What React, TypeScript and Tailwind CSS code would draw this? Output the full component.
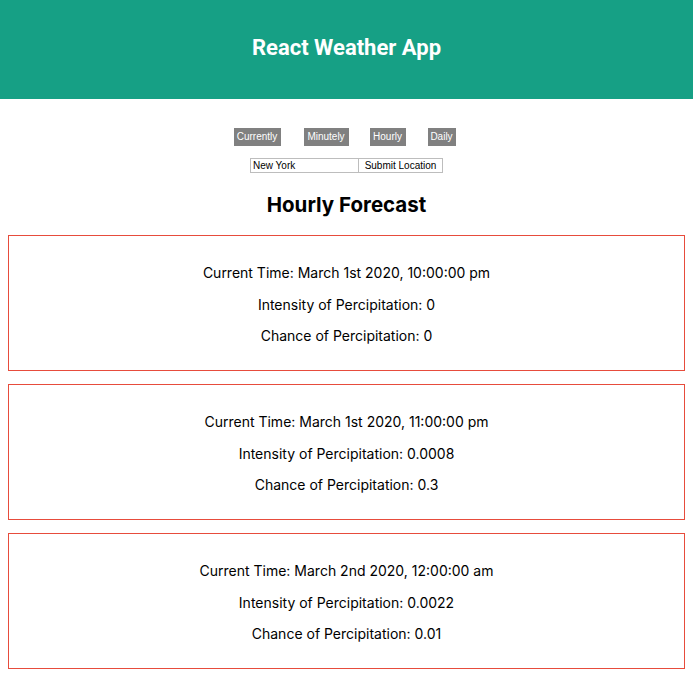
import React from "react";

const items = [
  { time: "March 1st 2020, 10:00:00 pm", intensity: "0", chance: "0" },
  { time: "March 1st 2020, 11:00:00 pm", intensity: "0.0008", chance: "0.3" },
  { time: "March 2nd 2020, 12:00:00 am", intensity: "0.0022", chance: "0.01" },
];

export default function App() {
  return (
    <div className="bg-white text-black" style={{ fontFamily: "Inter, 'Noto Sans', sans-serif" }}>
      <header className="h-[99px] bg-[#16a085] flex items-center justify-center pb-[3px]">
        <h1 className="text-white text-[22px] leading-[26px] font-bold" style={{ fontFamily: "Roboto, 'Liberation Sans', sans-serif" }}>
          React Weather App
        </h1>
      </header>
      <div className="flex justify-center mt-[29px] pr-[4px] text-[10px]" style={{ fontFamily: "'Liberation Sans', Arial, sans-serif" }}>
        <button className="bg-[#808080] text-white h-[18px] w-[47px] leading-[18px]">Currently</button>
        <button className="bg-[#808080] text-white h-[18px] w-[45px] ml-[23px] leading-[18px]">Minutely</button>
        <button className="bg-[#808080] text-white h-[18px] w-[36px] ml-[21px] leading-[18px]">Hourly</button>
        <button className="bg-[#808080] text-white h-[18px] w-[28px] ml-[22px] leading-[18px]">Daily</button>
      </div>
      <div className="flex justify-center mt-[12px] text-[10px]" style={{ fontFamily: "'Liberation Sans', Arial, sans-serif" }}>
        <input
          className="w-[109px] h-[15px] border border-[#bdbdbd] px-[2px] text-[10px] outline-none"
          defaultValue="New York"
        />
        <button className="w-[84px] h-[15px] border border-[#bdbdbd] border-l-0 bg-white text-black text-[10px] leading-[13px]">
          Submit Location
        </button>
      </div>
      <h2 className="text-center text-[20.5px] font-bold mt-[20px] leading-[24px]">Hourly Forecast</h2>
      <div className="px-[8px] mt-[18px] flex flex-col gap-[13px] pb-[6px]">
        {items.map((it, i) => (
          <div key={i} className="border border-[#e74c3c] h-[136px] flex flex-col items-center pt-[28px] gap-[14.5px] text-[14px] leading-[17px]">
            <p>Current Time: {it.time}</p>
            <p>Intensity of Percipitation: {it.intensity}</p>
            <p>Chance of Percipitation: {it.chance}</p>
          </div>
        ))}
      </div>
    </div>
  );
}
